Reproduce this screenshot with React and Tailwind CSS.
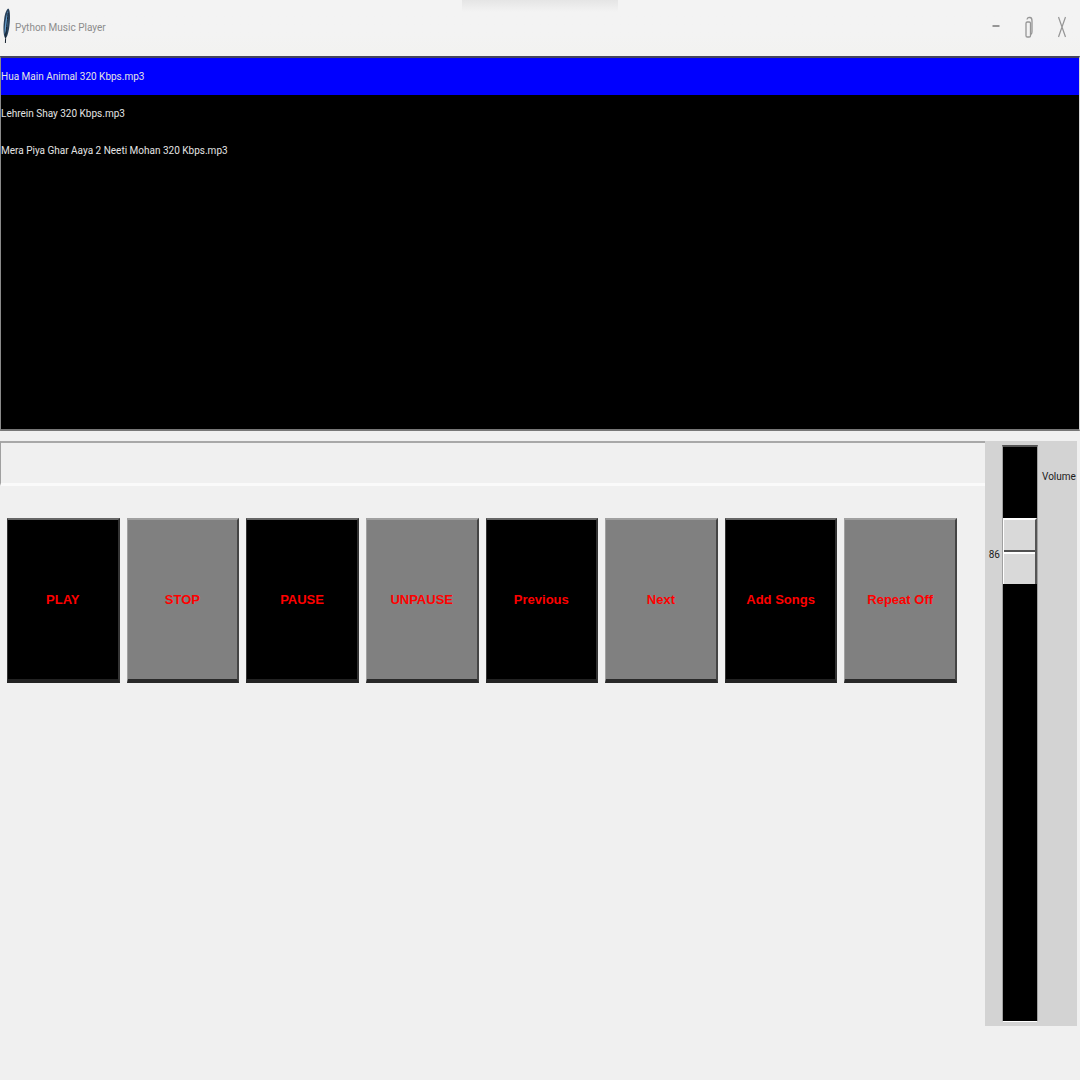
import { useState } from "react";

const songs = [
  "Hua Main Animal 320 Kbps.mp3",
  "Lehrein Shay 320 Kbps.mp3",
  "Mera Piya Ghar Aaya 2 Neeti Mohan 320 Kbps.mp3",
];

const actions = ["PLAY", "STOP", "PAUSE", "UNPAUSE", "Previous", "Next", "Add Songs", "Repeat Off"];

function TitleBar() {
  return (
    <header className="flex h-14 items-center bg-linear-to-b from-[#f3f3f3] from-60% to-[#f2f2f0] pl-[3px]">
      <div className="pointer-events-none absolute inset-x-0 top-0 flex justify-center">
        <div className="h-3 w-[156px] bg-linear-to-b from-[#e5e5e5] to-[#f3f3f3]" />
      </div>
      <svg className="mb-1 h-9 w-2 shrink-0" viewBox="0 0 8 36" preserveAspectRatio="none" aria-hidden="true">
        <path d="M5.2 .5C7.5 1.5 7.5 12 6 21C5 26 4 30 2 30C.2 27 .1 18 1.2 11C2 5 3.5 1.5 5.2 .5Z" fill="#27405a" />
        <path d="M4.8 3C3.5 7 1.5 15 1.6 26C4.5 22 5.7 11 4.8 3Z" fill="#659fd0" />
        <path d="M5 5C4.5 14 2.8 22 2.4 35" fill="none" stroke="#15212e" strokeWidth="1" />
      </svg>
      <h1 className="ml-1 font-[Roboto,sans-serif] text-[10px] leading-8 whitespace-nowrap text-[#8c8c8c]">Python Music Player</h1>
      <div className="ml-auto flex items-center pr-[1px] text-[#969696]">
        <button aria-label="Minimize" className="flex h-10 w-8 items-center justify-center">
          <svg className="h-6 w-2" viewBox="0 0 8 24" aria-hidden="true">
            <path d="M.5 10H7.5" stroke="currentColor" strokeWidth="2" />
          </svg>
        </button>
        <button aria-label="Restore" className="flex h-10 w-[33px] items-center justify-center">
          <svg className="h-6 w-2" viewBox="0 0 8 24" fill="none" stroke="currentColor" aria-hidden="true">
            <rect x="1" y="6" width="4.5" height="15" rx="1.3" strokeWidth="1.3" />
            <path d="M2 3.5Q2.3 1.5 4 1.5H5Q7 1.5 7 5V15Q7 18 6 18" strokeWidth="1.3" />
          </svg>
        </button>
        <button aria-label="Close" className="flex h-10 w-[34px] items-center justify-center">
          <svg className="h-6 w-2" viewBox="0 0 8 24" aria-hidden="true">
            <path d="M.5 1L7.5 21M7.5 1L.5 21" stroke="currentColor" strokeWidth="1.2" />
          </svg>
        </button>
      </div>
    </header>
  );
}

function Playlist() {
  const [selected, setSelected] = useState(0);
  return (
    <ul aria-label="Playlist" className="min-h-[375px] border-t-2 border-r border-b-2 border-l border-t-[#45455c] border-r-[#d8d8d8] border-b-[#777777] border-l-[#8a8a8a] bg-black">
      {songs.map((song, i) => (
        <li key={song}>
          <button
            aria-pressed={selected === i}
            onClick={() => setSelected(i)}
            className={`flex h-[37px] w-full items-center text-left font-[Roboto,sans-serif] text-[10px] whitespace-nowrap text-[#e4e4e4] ${selected === i ? "bg-[#0000ff]" : "bg-black"}`}
          >
            {song}
          </button>
        </li>
      ))}
    </ul>
  );
}

function Volume() {
  const [volume, setVolume] = useState(86);
  return (
    <div className="flex min-h-[585px] w-[92px] shrink-0 bg-[#d3d3d3] py-1 font-[Roboto,sans-serif] text-[#202020]">
      <div className="relative w-[17px] shrink-0">
        <output
          htmlFor="volume"
          className="absolute right-[2px] -translate-y-1/2 text-[10px] leading-3"
          style={{ top: `calc(38px + (100% - 66px) * ${(100 - volume) / 100})` }}
        >
          {volume}
        </output>
      </div>
      <input
        id="volume"
        type="range"
        min="0"
        max="100"
        value={volume}
        onChange={(e) => setVolume(Number(e.target.value))}
        className="w-9 shrink-0 appearance-none border border-t-2 border-[#a0a0a0] border-t-[#555555] border-b-white bg-black [direction:rtl] [writing-mode:vertical-lr] [&::-webkit-slider-thumb]:h-[66px] [&::-webkit-slider-thumb]:w-[34px] [&::-webkit-slider-thumb]:appearance-none [&::-webkit-slider-thumb]:border-t-2 [&::-webkit-slider-thumb]:border-r-2 [&::-webkit-slider-thumb]:border-l [&::-webkit-slider-thumb]:border-t-white [&::-webkit-slider-thumb]:border-r-[#555555] [&::-webkit-slider-thumb]:border-l-white [&::-webkit-slider-thumb]:bg-[linear-gradient(to_bottom,#d9d9d9_30px,#505050_30px,#505050_32px,#ffffff_32px,#ffffff_34px,#d9d9d9_34px)]"
      />
      <label htmlFor="volume" className="ml-1 h-fit pt-5 text-[10px] leading-6">
        Volume
      </label>
    </div>
  );
}

export default function App() {
  return (
    <div className="relative min-h-screen bg-[#f0f0f0]">
      <TitleBar />
      <main>
        <Playlist />
        <div className="flex items-start pt-[10px] pr-[3px]">
          <div className="min-w-0 flex-1">
            <div role="status" aria-label="Now playing" className="h-[45px] border-t-2 border-b-3 border-l border-t-[#a8a8a8] border-b-[#fafafa] border-l-[#a0a0a0]" />
            <div className="grid grid-cols-8 gap-[7px] pt-8 pr-7 pl-[7px]">
              {actions.map((action, i) => (
                <button
                  key={action}
                  className={`h-[165px] border-t-2 border-r-2 border-b-4 border-l font-['Liberation_Sans',sans-serif] text-[13px] leading-6 font-bold whitespace-nowrap text-[#ff0000] ${
                    i % 2 === 0
                      ? "border-t-[#666666] border-r-[#333333] border-b-[#222222] border-l-[#333333] bg-black"
                      : "border-t-[#a0a0a0] border-r-[#444444] border-b-[#292929] border-l-[#a0a0a0] bg-[#808080]"
                  }`}
                >
                  {action}
                </button>
              ))}
            </div>
          </div>
          <Volume />
        </div>
      </main>
    </div>
  );
}
